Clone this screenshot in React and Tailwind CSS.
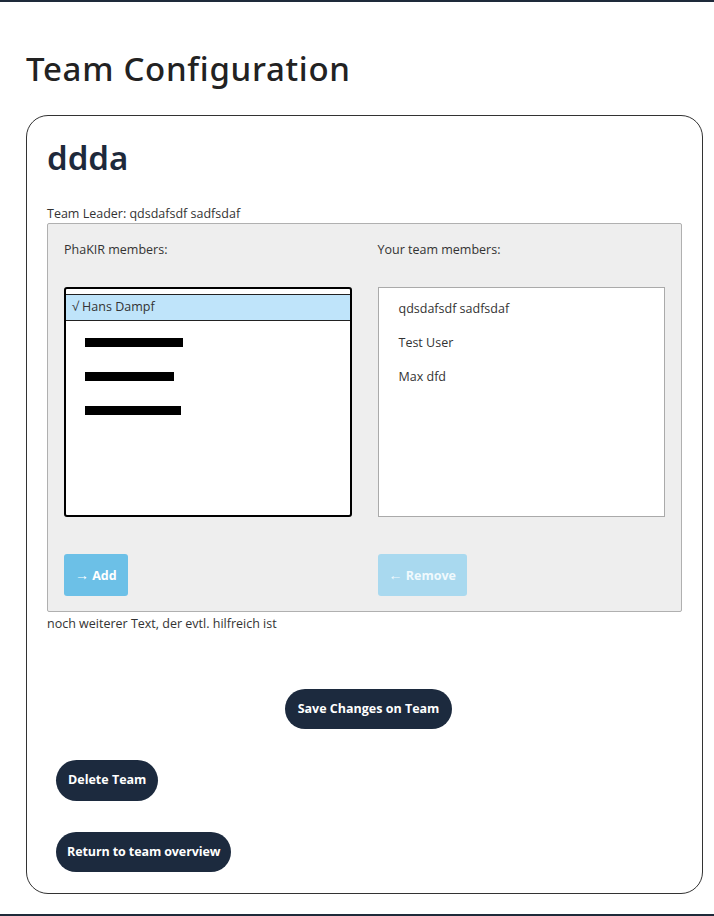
export default function App() {
  const body = { fontFamily: '"Open Sans", "Noto Sans", sans-serif' };
  const head = { fontFamily: '"Noto Sans", "Open Sans", sans-serif' };
  return (
    <div className="flex min-h-[916px] w-[714px] flex-col bg-white text-[#333]" style={body}>
      <div className="h-[2px] bg-[#1e2a3a]" />
      <div className="px-[26px]">
        <h1 className="mt-[45px] text-[33px] leading-[44px] font-medium text-[#222] tracking-[0.7px]" style={head}>
          Team Configuration
        </h1>
        <div className="mt-[24px] w-[677px] rounded-[22px] border border-[#333] px-[20px] pt-[20px] pb-[21px]">
          <h2 className="text-[33px] leading-[44px] font-semibold text-[#1e293b]" style={head}>ddda</h2>
          <p className="mt-[25px] text-[12.5px] leading-[18px] text-[#333]">Team Leader: qdsdafsdf sadfsdaf</p>
          <div className="rounded-[2px] border border-[#b0b0b0] bg-[#eeeeee] px-[16px] pt-[16px] pb-[15px]">
            <div className="grid grid-cols-2 gap-[26px]">
              <div>
                <p className="text-[12.5px] leading-[20px] text-[#333]">PhaKIR members:</p>
                <div className="mt-[27px] h-[230px] rounded-[3px] border-2 border-black bg-white pt-[5px]">
                  <div className="flex h-[27px] items-center border-y border-[#222] bg-[#bfe4fa] pl-[6px] text-[12.5px] text-[#333]">
                    √ Hans Dampf
                  </div>
                  <div className="mt-[12px] flex h-[18px] items-center pl-[19px]">
                    <div className="h-[9px] w-[98px] bg-black" />
                  </div>
                  <div className="mt-[16px] flex h-[18px] items-center pl-[19px]">
                    <div className="h-[9px] w-[89px] bg-black" />
                  </div>
                  <div className="mt-[16px] flex h-[18px] items-center pl-[19px]">
                    <div className="h-[9px] w-[96px] bg-black" />
                  </div>
                </div>
                <button className="mt-[37px] h-[42px] rounded-[3px] bg-[#6cc0e7] px-[11px] text-[12.5px] font-bold text-white">
                  <span className="text-[14px]">→</span> Add
                </button>
              </div>
              <div>
                <p className="text-[12.5px] leading-[20px] text-[#333]">Your team members:</p>
                <div className="mt-[27px] h-[230px] border border-[#aaa] bg-white pt-[12px] pl-[20px] text-[12.5px] text-[#333]">
                  <div className="h-[34px] leading-[18px]">qdsdafsdf sadfsdaf</div>
                  <div className="h-[34px] leading-[18px]">Test User</div>
                  <div className="h-[34px] leading-[18px]">Max dfd</div>
                </div>
                <button className="mt-[37px] h-[42px] rounded-[3px] bg-[#a9d9ef] px-[11px] text-[12.5px] font-bold text-[#f0f9fd]">
                  <span className="text-[14px]">←</span> Remove
                </button>
              </div>
            </div>
          </div>
          <p className="mt-[3px] text-[12.5px] leading-[18px] text-[#333]">noch weiterer Text, der evtl. hilfreich ist</p>
          <div className="mt-[56px] flex justify-center pl-[8px]">
            <button className="h-[40px] rounded-full bg-[#1c2a3e] px-[13px] text-[12.5px] font-bold text-white">
              Save Changes on Team
            </button>
          </div>
          <div className="mt-[31px] pl-[9px]">
            <button className="h-[41px] rounded-full bg-[#1c2a3e] px-[12px] text-[12.5px] font-bold text-white">
              Delete Team
            </button>
          </div>
          <div className="mt-[31px] pl-[9px]">
            <button className="h-[40px] rounded-full bg-[#1c2a3e] px-[11px] text-[12.5px] font-bold text-white tracking-[-0.1px]">
              Return to team overview
            </button>
          </div>
        </div>
      </div>
      <div className="mt-auto h-[2px] bg-[#1e2a3a]" />
    </div>
  );
}
